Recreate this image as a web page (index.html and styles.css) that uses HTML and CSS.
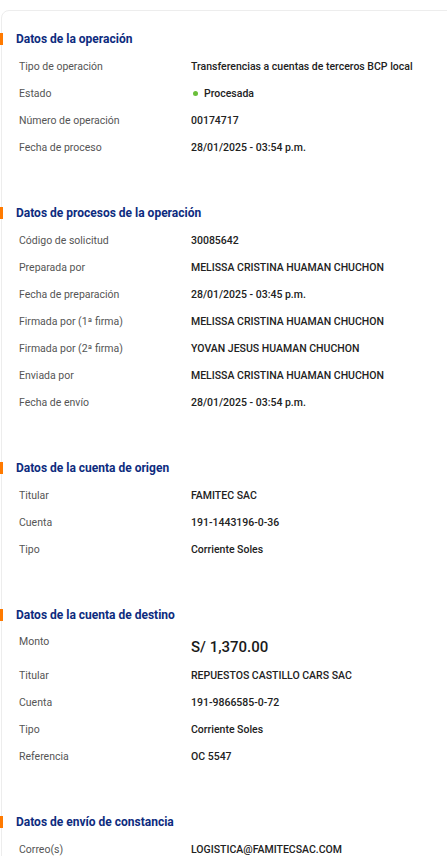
FILE: index.html
```html
<!DOCTYPE html>
<html lang="es">
<head>
<meta charset="utf-8">
<link rel="stylesheet" href="styles.css">
</head>
<body>
<div class="card">
  <section class="section">
    <h2 class="title">Datos de la operación</h2>
    <div class="rows">
      <div class="row"><span class="label">Tipo de operación</span><span class="value">Transferencias a cuentas de terceros BCP local</span></div>
      <div class="row"><span class="label">Estado</span><span class="value"><span class="dot"></span>Procesada</span></div>
      <div class="row"><span class="label">Número de operación</span><span class="value">00174717</span></div>
      <div class="row"><span class="label">Fecha de proceso</span><span class="value">28/01/2025 - 03:54 p.m.</span></div>
    </div>
  </section>
  <section class="section">
    <h2 class="title">Datos de procesos de la operación</h2>
    <div class="rows">
      <div class="row"><span class="label">Código de solicitud</span><span class="value">30085642</span></div>
      <div class="row"><span class="label">Preparada por</span><span class="value">MELISSA CRISTINA HUAMAN CHUCHON</span></div>
      <div class="row"><span class="label">Fecha de preparación</span><span class="value">28/01/2025 - 03:45 p.m.</span></div>
      <div class="row"><span class="label">Firmada por (1ª firma)</span><span class="value">MELISSA CRISTINA HUAMAN CHUCHON</span></div>
      <div class="row"><span class="label">Firmada por (2ª firma)</span><span class="value">YOVAN JESUS HUAMAN CHUCHON</span></div>
      <div class="row"><span class="label">Enviada por</span><span class="value">MELISSA CRISTINA HUAMAN CHUCHON</span></div>
      <div class="row"><span class="label">Fecha de envío</span><span class="value">28/01/2025 - 03:54 p.m.</span></div>
    </div>
  </section>
  <section class="section">
    <h2 class="title">Datos de la cuenta de origen</h2>
    <div class="rows">
      <div class="row"><span class="label">Titular</span><span class="value">FAMITEC SAC</span></div>
      <div class="row"><span class="label">Cuenta</span><span class="value">191-1443196-0-36</span></div>
      <div class="row"><span class="label">Tipo</span><span class="value">Corriente Soles</span></div>
    </div>
  </section>
  <section class="section">
    <h2 class="title">Datos de la cuenta de destino</h2>
    <div class="rows">
      <div class="row row-amount"><span class="label">Monto</span><span class="value amount">S/ 1,370.00</span></div>
      <div class="row"><span class="label">Titular</span><span class="value">REPUESTOS CASTILLO CARS SAC</span></div>
      <div class="row"><span class="label">Cuenta</span><span class="value">191-9866585-0-72</span></div>
      <div class="row"><span class="label">Tipo</span><span class="value">Corriente Soles</span></div>
      <div class="row"><span class="label">Referencia</span><span class="value">OC 5547</span></div>
    </div>
  </section>
  <section class="section">
    <h2 class="title">Datos de envío de constancia</h2>
    <div class="rows">
      <div class="row"><span class="label">Correo(s)</span><span class="value">LOGISTICA@FAMITECSAC.COM</span></div>
    </div>
  </section>
</div>
</body>
</html>
```

FILE: styles.css
```css
html, body {
  margin: 0;
  padding: 0;
  background: #ffffff;
  overflow: hidden;
}
body {
  font-family: Roboto, "Liberation Sans", sans-serif;
  color: #222;
}
.card {
  margin: 10px 0 0 1px;
  width: 460px;
  border: 1px solid #ededed;
  border-radius: 8px;
  padding: 21px 0 0 0;
  min-height: 900px;
}
.section {
  margin-bottom: 45px;
}
.title {
  position: relative;
  margin: 0 0 7px 0;
  padding-left: 14px;
  font-size: 12px;
  line-height: 14px;
  font-weight: 700;
  color: #0d2b7e;
}
.title::before {
  content: "";
  position: absolute;
  left: -2px;
  top: 1px;
  width: 3px;
  height: 12px;
  background: #ff7a00;
}
.rows {
  display: flex;
  flex-direction: column;
}
.row {
  display: grid;
  grid-template-columns: 172px 1fr;
  padding-left: 17px;
  height: 27px;
  align-items: center;
  font-size: 10.5px;
}
.label {
  color: #555;
}
.value {
  color: #222;
  font-weight: 500;
  display: flex;
  align-items: center;
}
.dot {
  width: 5px;
  height: 5px;
  border-radius: 50%;
  background: #6abf3a;
  margin: 0 6px 0 2px;
}
.row-amount {
  height: 33px;
  align-items: start;
}
.row-amount .label {
  padding-top: 6px;
}
.amount {
  font-size: 15px;
  line-height: 18px;
  font-weight: 500;
  color: #1a1a1a;
  padding-top: 9px;
}
```
